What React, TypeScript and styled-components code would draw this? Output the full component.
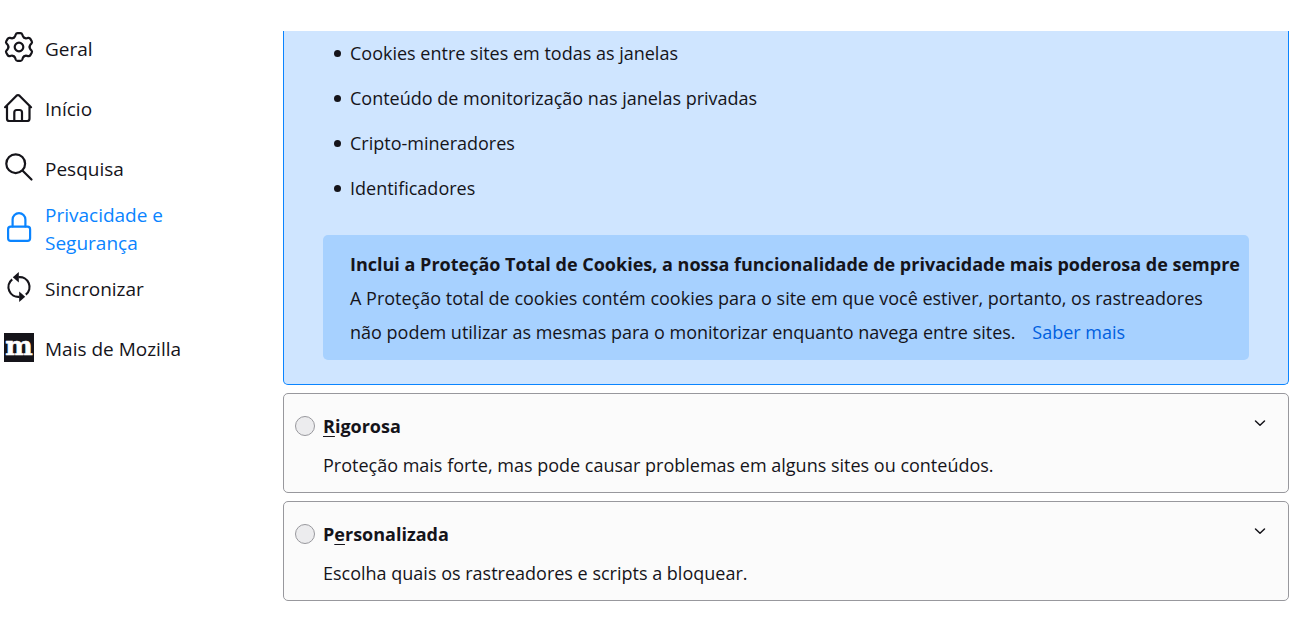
import React from "react";
import styled, { createGlobalStyle } from "styled-components";

const GlobalStyle = createGlobalStyle`
  *, *::before, *::after { box-sizing: border-box; }
  body {
    margin: 0;
    background: #ffffff;
    color: #15141a;
    font-family: "Open Sans", "Noto Sans", sans-serif;
    font-size: 18px;
    line-height: 28px;
  }
`;

const Page = styled.div`
  display: flex;
  align-items: flex-start;
`;

const Sidebar = styled.nav`
  flex: 0 0 283px;
  padding: 19px 0 0 4px;
`;

const NavLink = styled.a<{ $active?: boolean }>`
  display: flex;
  align-items: center;
  gap: 11px;
  width: 184px;
  height: 60px;
  color: ${(p) => (p.$active ? "#0a84ff" : "#15141a")};
  font-size: 19px;
  text-decoration: none;
`;

const NavIcon = styled.svg`
  flex: none;
  width: 30px;
  height: 30px;
  margin-bottom: 4px;
  fill: none;
  stroke: currentColor;
  stroke-width: 2.2;
  stroke-linecap: round;
  stroke-linejoin: round;
`;

const Main = styled.main`
  flex: 1;
  min-width: 0;
  display: flex;
  flex-direction: column;
  gap: 8px;
  padding: 31px 8px 28px 0;
`;

const SelectedPanel = styled.section`
  padding: 8px 39px 24px;
  background: #cfe5ff;
  border: 1px solid #0a84ff;
  border-top: none;
  border-radius: 0 0 5px 5px;
`;

const BlockedList = styled.ul`
  display: flex;
  flex-direction: column;
  gap: 17px;
  margin: 0 0 33px;
  padding: 0 0 0 11px;
  list-style: none;
`;

const BlockedItem = styled.li`
  display: flex;
  align-items: center;
  gap: 9px;

  &::before {
    content: "";
    width: 7px;
    height: 7px;
    margin-top: 1px;
    border-radius: 50%;
    background: #15141a;
  }
`;

const InfoBox = styled.div`
  padding: 12px 0 11px 27px;
  background: #a7d1ff;
  border-radius: 5px;
  line-height: 34px;
`;

const InfoTitle = styled.h3`
  margin: 0;
  font-size: 18px;
  font-weight: 700;
  white-space: nowrap;
`;

const InfoText = styled.p`
  margin: 0;
  white-space: nowrap;
`;

const LearnMore = styled.a`
  margin-left: 12px;
  color: #0060df;
  text-decoration: none;
`;

const OptionCard = styled.section`
  padding: 18px 19px 13px 11px;
  background: #fbfbfb;
  border: 1px solid #98989d;
  border-radius: 5px;
`;

const OptionHeader = styled.div`
  display: flex;
  align-items: center;
  gap: 8px;
`;

const Radio = styled.input`
  appearance: none;
  flex: none;
  width: 20px;
  height: 20px;
  margin: 0;
  background: #ececee;
  border: 1px solid #98989d;
  border-radius: 50%;
`;

const OptionLabel = styled.label`
  flex: 1;
  font-weight: 700;

  u {
    text-decoration-thickness: 1px;
    text-underline-offset: 3px;
    text-decoration-skip-ink: none;
  }
`;

const ExpandButton = styled.button`
  display: flex;
  padding: 0 3px 6px;
  background: none;
  border: none;
  color: #15141a;
`;

const OptionText = styled.p`
  margin: 11px 0 0 28px;
`;

const GearIcon = () => (
  <NavIcon viewBox="0 0 30 30" aria-hidden="true">
    <g transform="translate(15 15)">
      <circle r="4.3" />
      {[0, 60, 120, 180, 240, 300].map((angle) => (
        <path
          key={angle}
          transform={`rotate(${angle})`}
          d="M-5.3-9.2C-4.4-9.7-4-10.2-3.7-11.2L-3.3-12.5Q-2.8-13.9-1.4-13.9H1.4Q2.8-13.9 3.3-12.5L3.7-11.2C4-10.2 4.4-9.7 5.3-9.2"
        />
      ))}
    </g>
  </NavIcon>
);

const HomeIcon = () => (
  <NavIcon viewBox="0 0 30 30" aria-hidden="true">
    <path d="M1.1 15.2 12.5 3.7Q14 2.4 15.5 3.7L27 15.2M3 13.5V26.4Q3 29 5.6 29H22.9Q25.5 29 25.5 26.4V13.5" />
    <path d="M10.3 29V20.5Q10.3 18 12.7 18H15.5Q18 18 18 20.5V29" />
  </NavIcon>
);

const SearchIcon = () => (
  <NavIcon viewBox="0 0 30 30" aria-hidden="true">
    <circle cx="11.7" cy="11.7" r="9.4" />
    <path d="M18.7 18.7 27.5 27.5" />
  </NavIcon>
);

const LockIcon = () => (
  <NavIcon viewBox="0 0 30 30" aria-hidden="true">
    <rect x="4.1" y="14.6" width="22" height="14.3" rx="2.6" />
    <path d="M8.6 14.4V7.6A6.4 6.4 0 0 1 21.4 7.6V14.4" />
  </NavIcon>
);

const SyncIcon = () => (
  <NavIcon viewBox="0 0 30 30" aria-hidden="true">
    <g strokeLinecap="butt">
      <path d="M14.5 5.2A9.8 9.8 0 0 1 21.8 22.6" />
      <path d="M15.5 24.8A9.8 9.8 0 0 1 8.2 7.4" />
    </g>
    <g fill="currentColor" stroke="none">
      <path d="M14.8 0V10.6L8.8 5.3Z" />
      <path d="M15.2 30V19.4L21.2 24.7Z" />
    </g>
  </NavIcon>
);

const MozillaIcon = () => (
  <NavIcon viewBox="0 0 30 30" aria-hidden="true">
    <rect y="1" width="30" height="29" fill="#15141a" stroke="none" />
    <text
      x="15"
      y="23"
      textAnchor="middle"
      fill="#ffffff"
      stroke="#ffffff"
      strokeWidth="0.6"
      fontFamily="DejaVu Serif, serif"
      fontWeight="700"
      fontSize="26"
    >
      m
    </text>
  </NavIcon>
);

const sections = [
  { id: "geral", label: "Geral", Icon: GearIcon },
  { id: "inicio", label: "Início", Icon: HomeIcon },
  { id: "pesquisa", label: "Pesquisa", Icon: SearchIcon },
  { id: "privacidade", label: "Privacidade e Segurança", Icon: LockIcon, active: true },
  { id: "sincronizar", label: "Sincronizar", Icon: SyncIcon },
  { id: "mais", label: "Mais de Mozilla", Icon: MozillaIcon },
];

const blocked = [
  "Cookies entre sites em todas as janelas",
  "Conteúdo de monitorização nas janelas privadas",
  "Cripto-mineradores",
  "Identificadores",
];

interface OptionProps {
  id: string;
  title: React.ReactNode;
  text: string;
}

const Option = ({ id, title, text }: OptionProps) => (
  <OptionCard>
    <OptionHeader>
      <Radio type="radio" name="protection" id={id} />
      <OptionLabel htmlFor={id}>{title}</OptionLabel>
      <ExpandButton type="button" aria-label="Expandir" aria-controls={`${id}-text`}>
        <svg width="12" height="8" viewBox="0 0 12 8" fill="none" stroke="currentColor" strokeWidth="1.5" strokeLinecap="round" strokeLinejoin="round" aria-hidden="true">
          <path d="M1.5 2 6 6.2 10.5 2" />
        </svg>
      </ExpandButton>
    </OptionHeader>
    <OptionText id={`${id}-text`}>{text}</OptionText>
  </OptionCard>
);

export default function App() {
  return (
    <>
      <GlobalStyle />
      <Page>
        <Sidebar>
          {sections.map(({ id, label, Icon, active }) => (
            <NavLink key={id} href={`#${id}`} $active={active} aria-current={active ? "page" : undefined}>
              <Icon />
              <span>{label}</span>
            </NavLink>
          ))}
        </Sidebar>
        <Main>
          <SelectedPanel>
            <BlockedList>
              {blocked.map((item) => (
                <BlockedItem key={item}>{item}</BlockedItem>
              ))}
            </BlockedList>
            <InfoBox>
              <InfoTitle>
                Inclui a Proteção Total de Cookies, a nossa funcionalidade de privacidade mais poderosa de sempre
              </InfoTitle>
              <InfoText>
                A Proteção total de cookies contém cookies para o site em que você estiver, portanto, os rastreadores
                <br />
                não podem utilizar as mesmas para o monitorizar enquanto navega entre sites.{" "}
                <LearnMore href="#saber-mais">Saber mais</LearnMore>
              </InfoText>
            </InfoBox>
          </SelectedPanel>
          <Option
            id="rigorosa"
            title={<><u>R</u>igorosa</>}
            text="Proteção mais forte, mas pode causar problemas em alguns sites ou conteúdos."
          />
          <Option
            id="personalizada"
            title={<>P<u>e</u>rsonalizada</>}
            text="Escolha quais os rastreadores e scripts a bloquear."
          />
        </Main>
      </Page>
    </>
  );
}
